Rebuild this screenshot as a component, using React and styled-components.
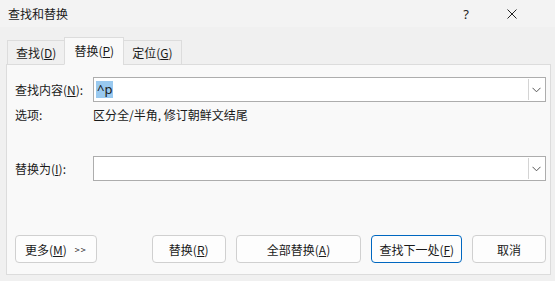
import React from "react";
import styled, { createGlobalStyle } from "styled-components";

const Global = createGlobalStyle`
  html, body { margin: 0; padding: 0; }
  body {
    width: 555px; height: 281px; overflow: hidden;
    background: #f0f0f0;
    font-family: "Noto Sans CJK SC", "Noto Sans", sans-serif;
    font-size: 12px; color: #1a1a1a;
  }
`;

const Window = styled.div`
  width: 555px; height: 281px;
  display: flex; flex-direction: column;
  background: #f0f0f0;
`;

const TitleBar = styled.div`
  height: 27px; display: flex; align-items: center;
  padding-left: 8px; padding-right: 20px; background: #f3f3f3;
  font-size: 12px;
`;

const Title = styled.div`flex: 1;`;

const TitleBtn = styled.div`
  width: 46px; height: 27px; display: flex; align-items: center; justify-content: center;
  color: #222; font-size: 13px; font-family: "Noto Sans", sans-serif;
`;

const Body = styled.div`
  flex: 1; display: flex; flex-direction: column;
  padding: 9px 4px 6px 6px;
`;

const Tabs = styled.div`
  display: flex; align-items: flex-end; height: 28px; padding-left: 1px;
  position: relative; z-index: 1;
`;

const Tab = styled.div`
  height: ${p => (p.$active ? "28px" : "25px")};
  padding: 0 ${p => (p.$active ? "9px" : "8px")};
  display: flex; align-items: center; box-sizing: border-box;
  background: ${p => (p.$active ? "#f9f9f9" : "#f0f0f0")};
  border: 1px solid #dcdcdc;
  border-bottom: ${p => (p.$active ? "1px solid #f9f9f9" : "1px solid #dcdcdc")};
  margin-left: ${p => (p.$first ? "0" : "-1px")};
  margin-bottom: -1px;
  padding-bottom: ${p => (p.$active ? "2px" : "0")};
`;

const U = styled.span`text-decoration: underline; text-underline-offset: 1px;`;

const Panel = styled.div`
  flex: 1; background: #f9f9f9; border: 1px solid #dcdcdc;
  display: flex; flex-direction: column;
  padding: 12px 4px 11px 8px;
`;

const Row = styled.div`
  display: flex; align-items: center; height: ${p => p.$h || "25px"};
  margin-top: ${p => p.$mt || "0"};
`;

const Label = styled.div`width: 78px; flex-shrink: 0;`;

const Combo = styled.div`
  flex: 1; height: 25px; box-sizing: border-box;
  border: 1px solid #adadad; background: #fff;
  display: flex; align-items: center; padding-left: 2px;
`;

const Value = styled.div`flex: 1; display: flex; align-items: center; font-family: "Noto Sans", sans-serif; font-size: 13px;`;

const Sel = styled.span`background: #99c9ef; color: #1a1a1a; padding: 0 1px; line-height: 17px;`;

const DropBtn = styled.div`
  width: 15px; height: 21px; margin-right: 1px;
  border-left: 1px solid #d4d4d4;
  display: flex; align-items: center; justify-content: center;
`;

const Spacer = styled.div`flex: 1;`;

const Buttons = styled.div`display: flex; align-items: center; height: 28px;`;

const Btn = styled.div`
  width: ${p => p.$w}px; height: 28px; box-sizing: border-box;
  margin-left: ${p => p.$ml || 0}px;
  border: 1px solid ${p => (p.$primary ? "#0067c0" : "#d0d0d0")};
  border-radius: 4px; background: #fdfdfd;
  display: flex; align-items: center; justify-content: center;
`;

const Arrows = styled.span`font-size: 9px; margin-left: 8px; letter-spacing: 1px;`;

const Chevron = () => (
  <svg width="9" height="6" viewBox="0 0 9 6">
    <path d="M0.5 0.8 L4.5 4.8 L8.5 0.8" fill="none" stroke="#555" strokeWidth="1" />
  </svg>
);

export default function App() {
  return (
    <>
      <Global />
      <Window>
        <TitleBar>
          <Title>查找和替换</Title>
          <TitleBtn>?</TitleBtn>
          <TitleBtn>
            <svg width="10" height="10" viewBox="0 0 10 10">
              <path d="M0.5 0.5 L9.5 9.5 M9.5 0.5 L0.5 9.5" stroke="#222" strokeWidth="1" />
            </svg>
          </TitleBtn>
        </TitleBar>
        <Body>
          <Tabs>
            <Tab $first>查找(<U>D</U>)</Tab>
            <Tab $active>替换(<U>P</U>)</Tab>
            <Tab>定位(<U>G</U>)</Tab>
          </Tabs>
          <Panel>
            <Row>
              <Label>查找内容(<U>N</U>):</Label>
              <Combo>
                <Value><Sel>^p</Sel></Value>
                <DropBtn><Chevron /></DropBtn>
              </Combo>
            </Row>
            <Row $h="20px" $mt="2px">
              <Label>选项:</Label>
              <div>区分全/半角, 修订朝鲜文结尾</div>
            </Row>
            <Row $mt="32px">
              <Label>替换为(<U>I</U>):</Label>
              <Combo>
                <Value />
                <DropBtn><Chevron /></DropBtn>
              </Combo>
            </Row>
            <Spacer />
            <Buttons>
              <Btn $w={82}>更多(<U>M</U>)<Arrows>&gt;&gt;</Arrows></Btn>
              <Btn $w={74} $ml={55}>替换(<U>R</U>)</Btn>
              <Btn $w={126} $ml={10}>全部替换(<U>A</U>)</Btn>
              <Btn $w={91} $ml={10} $primary>查找下一处(<U>F</U>)</Btn>
              <Btn $w={74} $ml={10}>取消</Btn>
            </Buttons>
          </Panel>
        </Body>
      </Window>
    </>
  );
}
